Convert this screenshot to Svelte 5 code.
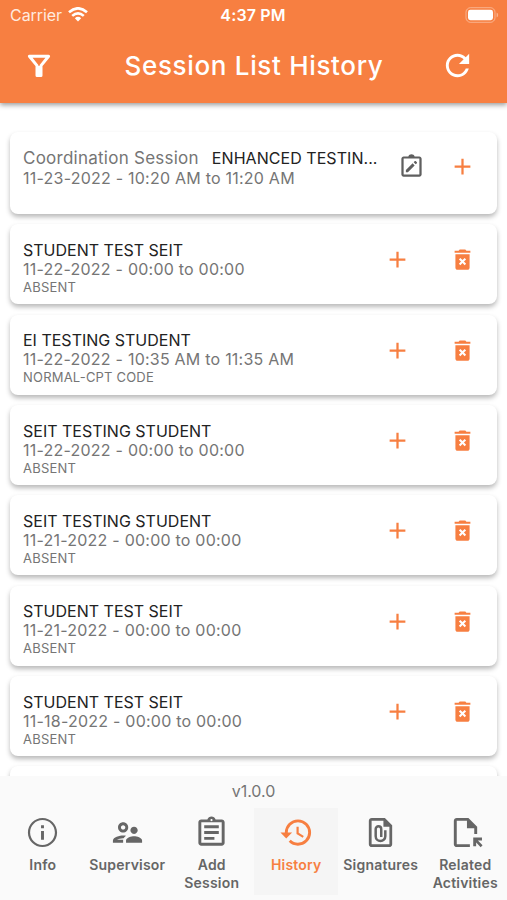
<script>
	const sessions = [
		{ name: "STUDENT TEST SEIT", time: "11-22-2022 - 00:00 to 00:00", status: "ABSENT" },
		{ name: "EI TESTING STUDENT", time: "11-22-2022 - 10:35 AM to 11:35 AM", status: "NORMAL-CPT CODE" },
		{ name: "SEIT TESTING STUDENT", time: "11-22-2022 - 00:00 to 00:00", status: "ABSENT" },
		{ name: "SEIT TESTING STUDENT", time: "11-21-2022 - 00:00 to 00:00", status: "ABSENT" },
		{ name: "STUDENT TEST SEIT", time: "11-21-2022 - 00:00 to 00:00", status: "ABSENT" },
		{ name: "STUDENT TEST SEIT", time: "11-18-2022 - 00:00 to 00:00", status: "ABSENT" }
	]

	const tabs = [
		{
			label: "Info",
			icon: "M11 7h2v2h-2zm0 4h2v6h-2zm1-9C6.48 2 2 6.48 2 12s4.48 10 10 10 10-4.48 10-10S17.52 2 12 2zm0 18.5c-4.69 0-8.5-3.81-8.5-8.5S7.31 3.5 12 3.5s8.5 3.81 8.5 8.5-3.81 8.5-8.5 8.5z"
		},
		{
			label: "Supervisor",
			icon: "M9 12c1.93 0 3.5-1.57 3.5-3.5S10.93 5 9 5 5.5 6.57 5.5 8.5 7.07 12 9 12zm0-5c.83 0 1.5.67 1.5 1.5S9.83 10 9 10s-1.5-.67-1.5-1.5S8.17 7 9 7zm.05 10H4.77c.99-.5 2.7-1 4.23-1 .11 0 .23.01.34.02.34-.73.93-1.33 1.64-1.81-.73-.13-1.42-.21-1.98-.21-2.34 0-7 1.17-7 3.5V19h7v-1.5c0-.17.02-.34.05-.5zm7.45-2.5c-1.84 0-5.5 1.01-5.5 3V19h11v-1.5c0-1.99-3.66-3-5.5-3zm1.21-1.82c.76-.43 1.29-1.24 1.29-2.18C19 9.12 17.88 8 16.5 8S14 9.12 14 10.5c0 .94.53 1.75 1.29 2.18.36.2.77.32 1.21.32s.85-.12 1.21-.32z"
		},
		{
			label: "Add Session",
			icon: "M7 15h7v2H7zm0-4h10v2H7zm0-4h10v2H7zm12-4h-4.18C14.4 1.84 13.3 1 12 1s-2.4.84-2.82 2H5c-1.1 0-2 .9-2 2v14c0 1.1.9 2 2 2h14c1.1 0 2-.9 2-2V5c0-1.1-.9-2-2-2zm-7-.25c.41 0 .75.34.75.75s-.34.75-.75.75-.75-.34-.75-.75.34-.75.75-.75zM19 19H5V5h14v14z"
		},
		{
			label: "History",
			active: true,
			icon: "M13.5 8H12v5l4.28 2.54.72-1.21-3.5-2.08V8M13 3a9 9 0 0 0-9 9H1l3.96 4.03L9 12H6a7 7 0 0 1 7-7 7 7 0 0 1 7 7 7 7 0 0 1-7 7c-1.93 0-3.68-.79-4.94-2.06l-1.42 1.42A8.9 8.9 0 0 0 13 21a9 9 0 0 0 9-9 9 9 0 0 0-9-9"
		},
		{
			label: "Signatures",
			icon: "M15 2H6c-1.1 0-2 .9-2 2v16c0 1.1.9 2 2 2h12c1.1 0 2-.9 2-2V7l-5-5zM5.9 20.1V3.9H14V8h4.1v12.1z",
			clip: "M15.3 10.5v4a3.3 3.3 0 0 1-6.6 0V9.6a1.9 1.9 0 0 1 3.8 0V15"
		},
		{
			label: "Related Activities",
			icon: "M14 2H6c-1.1 0-2 .9-2 2v16c0 1.1.9 2 2 2h9v-2H6V4h7v5h5v4h2V8l-6-6zM17.3 15.4v6h2v-2.6l3.1 3.3 1.3-1.4-3.2-3.3h2.8v-2z"
		}
	]
</script>

<div class="app">
	<header class="header">
		<div class="status">
			<div class="carrier">
				<span>Carrier</span>
				<svg width="20" height="15" viewBox="0 0 20 15" fill="none" stroke="#fff" stroke-width="2.6">
					<path d="M1 5.3Q10-2.7 19 5.3M4.2 8.9Q10 3.7 15.8 8.9" />
					<path d="M6.8 11.2Q10 8.4 13.2 11.2L10 14.5z" fill="#fff" stroke="none" />
				</svg>
			</div>
			<span class="clock">4:37 PM</span>
			<svg class="battery" width="34" height="16" viewBox="0 0 34 16">
				<rect x="1" y=".7" width="29" height="14.6" rx="4.5" fill="none" stroke="#fff" stroke-opacity=".4" />
				<rect x="3" y="2.8" width="25" height="10.4" rx="2.4" fill="#fff" />
				<path d="M31.6 5.5v5q1.6-.8 1.6-2.5t-1.6-2.5z" fill="#fff" fill-opacity=".4" />
			</svg>
		</div>
		<div class="toolbar">
			<button aria-label="Filter">
				<svg width="24" height="24" viewBox="0 0 24 24">
					<path
						d="M2.4 2.2h19.2L14 11.6v10H10v-10z"
						fill="none"
						stroke="#fff"
						stroke-width="3"
						stroke-linejoin="round" />
					<path d="M9.5 12h5v10h-5z" fill="#fff" />
				</svg>
			</button>
			<h1>Session List History</h1>
			<button aria-label="Refresh">
				<svg width="35" height="35" viewBox="0 0 24 24" fill="#fff">
					<path
						d="M17.65 6.35C16.2 4.9 14.21 4 12 4c-4.42 0-7.99 3.58-7.99 8s3.57 8 7.99 8c3.73 0 6.84-2.55 7.73-6h-2.08c-.82 2.33-3.04 4-5.65 4-3.31 0-6-2.69-6-6s2.69-6 6-6c1.66 0 3.14.69 4.22 1.78L13 11h7V4l-2.35 2.35z" />
				</svg>
			</button>
		</div>
	</header>

	<main class="list">
		<article class="card card--first">
			<div class="details">
				<div class="headline">
					<span class="kind">Coordination Session</span>
					<span class="name">ENHANCED TESTIN...</span>
				</div>
				<div class="time">11-23-2022 - 10:20 AM to 11:20 AM</div>
			</div>
			<div class="actions actions--first">
				<button aria-label="Sign">
					<svg width="27" height="27" viewBox="0 0 24 24" fill="#5f5f5f">
						<path
							d="M19 3h-4.2C14.4 1.8 13.3 1 12 1s-2.4.8-2.8 2H5c-1.1 0-2 .9-2 2v14c0 1.1.9 2 2 2h14c1.1 0 2-.9 2-2V5c0-1.1-.9-2-2-2zm0 16.2H5V4.8h14v14.4zM7 15.2V17h1.8l6-6L13 9.2zM16.8 9c.2-.2.2-.5 0-.7l-1.1-1.1c-.2-.2-.5-.2-.7 0l-1.1 1.1 1.8 1.8z" />
					</svg>
				</button>
				<button aria-label="Add">
					<svg width="27" height="27" viewBox="0 0 24 24" fill="#f77f41">
						<path d="M19 13h-6v6h-2v-6H5v-2h6V5h2v6h6z" />
					</svg>
				</button>
			</div>
		</article>

		{#each sessions as session}
			<article class="card">
				<div class="details">
					<div class="name">{session.name}</div>
					<div class="time">{session.time}</div>
					<div class="state">{session.status}</div>
				</div>
				<div class="actions">
					<button aria-label="Add">
						<svg width="27" height="27" viewBox="0 0 24 24" fill="#f77f41">
							<path d="M19 13h-6v6h-2v-6H5v-2h6V5h2v6h6z" />
						</svg>
					</button>
					<button aria-label="Delete">
						<svg width="27" height="27" viewBox="0 0 24 24" fill="#f77f41">
							<path
								fill-rule="evenodd"
								d="M5.7 7.3v12c0 1.1.8 1.9 1.9 1.9h8.8c1.1 0 1.9-.8 1.9-1.9v-12zM19 4.3h-3.5l-1-1.1h-5l-1 1.1H5v1.8h14zM10.1 10.6L12 12.5l1.9-1.9 1.3 1.3-1.9 1.9 1.9 1.9-1.3 1.3-1.9-1.9-1.9 1.9-1.3-1.3 1.9-1.9-1.9-1.9z" />
						</svg>
					</button>
				</div>
			</article>
		{/each}
		<article class="card"></article>
	</main>

	<footer class="footer">
		<div class="version">v1.0.0</div>
		<nav class="tabs">
			{#each tabs as tab}
				<button class="tab" class:tab--active={tab.active}>
					<svg width="35" height="35" viewBox="0 0 24 24" fill="currentColor">
						<path d={tab.icon} fill-rule={tab.clip ? "evenodd" : "nonzero"} />
						{#if tab.clip}
							<path d={tab.clip} fill="none" stroke="currentColor" stroke-width="1.7" />
						{/if}
					</svg>
					<span>{tab.label}</span>
				</button>
			{/each}
		</nav>
	</footer>
</div>

<style>
	:global(body) {
		margin: 0;
		background: #fff;
	}

	.app {
		display: flex;
		flex-direction: column;
		height: 900px;
		overflow: hidden;
		font-family: Inter, "Liberation Sans", sans-serif;
		color: #757575;
	}

	button {
		display: flex;
		align-items: center;
		justify-content: center;
		padding: 0;
		border: 0;
		background: none;
		color: inherit;
		font: inherit;
	}

	svg {
		display: block;
		flex: none;
	}

	.header {
		flex: none;
		height: 103px;
		background: #f77f41;
		color: #fff;
		box-shadow: 0 2px 5px rgba(0, 0, 0, 0.4);
		z-index: 1;
	}

	.status {
		display: grid;
		grid-template-columns: 1fr auto 1fr;
		align-items: center;
		height: 29px;
		padding: 0 8px 0 10px;
		font-size: 16px;
	}

	.carrier {
		display: flex;
		align-items: center;
		gap: 6px;
		letter-spacing: -0.05px;
		color: #ffeadf;
	}

	.clock {
		margin-left: -3px;
		font-weight: 600;
		letter-spacing: 0.15px;
	}

	.battery {
		justify-self: end;
	}

	.toolbar {
		display: grid;
		grid-template-columns: 77px 1fr 100px;
		align-items: center;
		height: 74px;
	}

	.toolbar button {
		padding-bottom: 1px;
	}

	h1 {
		margin: 0 -12px 2px 12px;
		text-align: center;
		font-size: 26px;
		font-weight: 500;
		letter-spacing: 0.67px;
		white-space: nowrap;
	}

	.list {
		flex: 1;
		min-height: 0;
		overflow: hidden;
		padding: 29px 10px 0;
	}

	.card {
		display: flex;
		justify-content: space-between;
		box-sizing: border-box;
		height: 80px;
		margin-bottom: 10.33px;
		padding: 16.6px 12px 0 13px;
		border-radius: 8px;
		background: #fff;
		box-shadow: 0 3px 5px rgba(0, 0, 0, 0.28);
	}

	.card--first {
		height: 82px;
		padding-top: 16px;
	}

	.details {
		min-width: 0;
	}

	.headline {
		display: flex;
		gap: 13px;
		width: 360px;
		line-height: 21px;
		white-space: nowrap;
	}

	.kind {
		font-size: 17px;
		letter-spacing: 0.25px;
	}

	.name {
		color: #222;
		font-size: 16px;
		line-height: 19px;
	}

	.headline .name {
		line-height: 21px;
		letter-spacing: 0.05px;
	}

	.time {
		font-size: 16px;
		line-height: 19px;
		letter-spacing: 0.23px;
	}

	.state {
		font-size: 13px;
		line-height: 17px;
		letter-spacing: 0.2px;
	}

	.actions {
		display: flex;
		flex: none;
		align-items: flex-start;
		gap: 38px;
		padding: 5.4px 9px 0 0;
	}

	.actions--first {
		gap: 24px;
		margin-left: -20px;
		padding-top: 5px;
	}

	.footer {
		flex: none;
		height: 124px;
		background: #fafafa;
		z-index: 1;
	}

	.version {
		height: 32px;
		font-size: 16px;
		line-height: 31px;
		text-align: center;
	}

	.tabs {
		display: grid;
		grid-template-columns: repeat(6, 1fr);
		height: 87px;
	}

	.tab {
		flex-direction: column;
		justify-content: flex-start;
		gap: 7px;
		padding: 7px 0 0 1px;
		color: #666;
		font-size: 14px;
		font-weight: 600;
		line-height: 18px;
		letter-spacing: 0.2px;
	}

	.tab svg {
		margin-bottom: -1px;
	}

	.tab--active {
		background: #f5f5f5;
		color: #f77f41;
	}
</style>
